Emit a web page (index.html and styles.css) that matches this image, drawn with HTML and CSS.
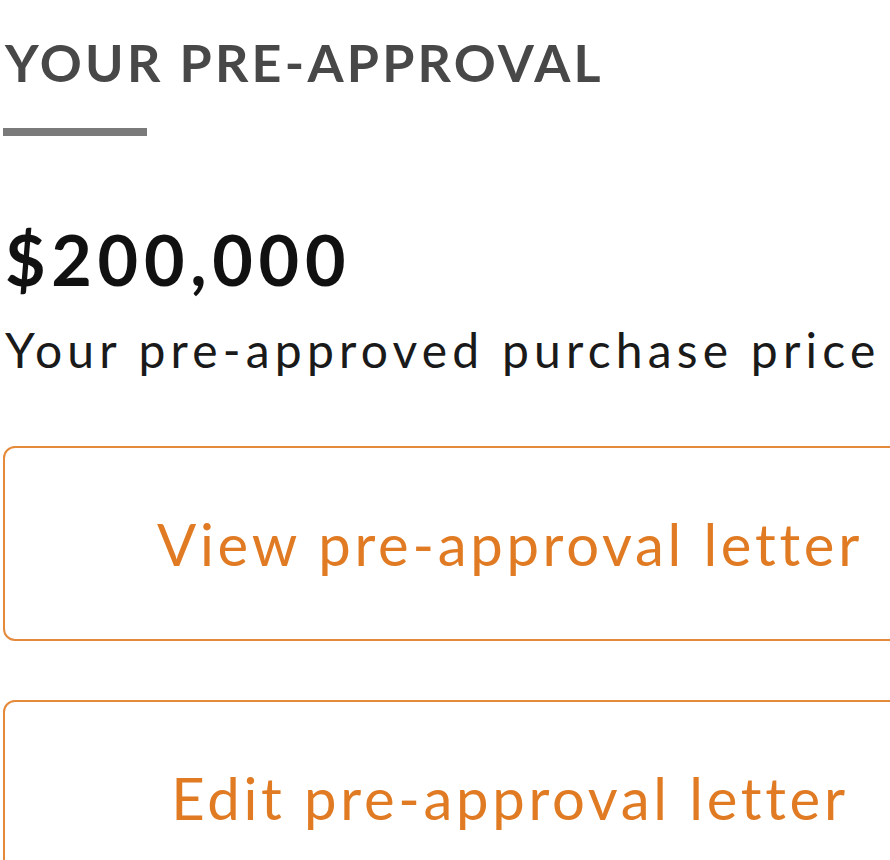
FILE: index.html
```html
<!DOCTYPE html>
<html lang="en">
<head>
    <meta charset="UTF-8" />
    <title>Your Pre-Approval</title>
    <link rel="stylesheet" href="styles.css">
</head>
<body>
    <main class="page">
        <header class="section-head">
            <h2 class="section-title">YOUR PRE-APPROVAL</h2>
            <div class="title-rule"></div>
        </header>

        <div class="approval">
            <div class="amount">$200,000</div>
            <p class="amount-label">Your pre-approved purchase price</p>
        </div>

        <div class="actions">
            <button type="button" class="btn-outline">View pre-approval letter</button>
            <button type="button" class="btn-outline">Edit pre-approval letter</button>
        </div>
    </main>
</body>
</html>
```

FILE: styles.css
```css
body {
    margin: 0;
    padding: 0;
    background: #fff;
    font-family: Lato, "Open Sans", sans-serif;
    overflow: hidden;
}

.page {
    padding: 36px 0 0 3px;
    width: 1014px;
}

.section-title {
    margin: 0;
    font-size: 52px;
    line-height: 1;
    font-weight: 700;
    letter-spacing: 3.25px;
    color: #484848;
    padding-left: 2px;
}

.title-rule {
    width: 144px;
    height: 8px;
    background: #7a7a7a;
    margin-top: 40px;
}

.approval {
    padding-left: 2px;
}

.amount {
    margin-top: 88px;
    font-size: 70px;
    line-height: 1;
    font-weight: 700;
    letter-spacing: 5.7px;
    color: #111;
}

.amount-label {
    margin: 32px 0 0;
    font-size: 48px;
    line-height: 1;
    letter-spacing: 5.2px;
    color: #1a1a1a;
}

.actions {
    display: flex;
    flex-direction: column;
    gap: 59px;
    margin-top: 72px;
}

.btn-outline {
    width: 100%;
    height: 195px;
    background: #fff;
    border: 2px solid #e5893a;
    border-radius: 12px;
    font-family: Lato, "Open Sans", sans-serif;
    font-size: 58px;
    line-height: 1;
    letter-spacing: 3.7px;
    color: #e07b24;
    cursor: pointer;
}
```
